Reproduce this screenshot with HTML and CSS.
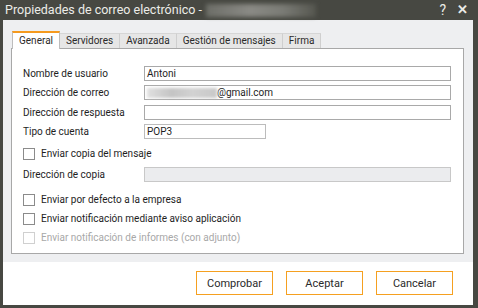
FILE: index.html
```html
<!DOCTYPE html>
<html lang="es">
<head>
  <meta charset="UTF-8">
  <title>Propiedades de correo electrónico</title>
  <link rel="stylesheet" href="styles.css">
</head>
<body>
  <div class="window">
    <div class="titlebar">
      <span class="title">Propiedades de correo electrónico -</span>
      <span class="blur-title"></span>
      <span class="title-btns"><span class="help">?</span><span class="close">&#x2715;</span></span>
    </div>

    <div class="content">
      <div class="tabs">
        <div class="tab active">General</div>
        <div class="tab">Servidores</div>
        <div class="tab">Avanzada</div>
        <div class="tab">Gestión de mensajes</div>
        <div class="tab">Firma</div>
      </div>

      <div class="panel">
        <div class="row">
          <label>Nombre de usuario</label>
          <div class="field">Antoni</div>
        </div>
        <div class="row">
          <label>Dirección de correo</label>
          <div class="field"><span class="blur-mail"></span>@gmail.com</div>
        </div>
        <div class="row">
          <label>Dirección de respuesta</label>
          <div class="field"></div>
        </div>
        <div class="row">
          <label>Tipo de cuenta</label>
          <div class="field short">POP3</div>
        </div>

        <div class="check first"><span class="box"></span>Enviar copia del mensaje</div>

        <div class="row copy">
          <label>Dirección de copia</label>
          <div class="field disabled"></div>
        </div>

        <div class="check gap"><span class="box"></span>Enviar por defecto a la empresa</div>
        <div class="check"><span class="box"></span>Enviar notificación mediante aviso aplicación</div>
        <div class="check off"><span class="box"></span>Enviar notificación de informes (con adjunto)</div>
      </div>
    </div>

    <div class="footer">
      <button class="btn">Comprobar</button>
      <button class="btn">Aceptar</button>
      <button class="btn">Cancelar</button>
    </div>
  </div>
</body>
</html>
```

FILE: styles.css
```css
/* base */
body {
  margin: 0;
  font-family: Roboto, "Noto Sans", sans-serif;
  font-size: 10px;
  color: #1e1e1e;
}

.window {
  width: 478px;
  height: 308px;
  box-sizing: border-box;
  background-color: #474842;
  padding: 0 5px 3px 3px;
  display: flex;
  flex-direction: column;
}

/* title bar */
.titlebar {
  height: 20px;
  flex: none;
  display: flex;
  align-items: center;
  padding-left: 5px;
  color: #ecece8;
  font-size: 12.5px;
  margin-left: -3px;
  margin-right: -5px;
  padding-right: 10px;
}

.title {
  line-height: 20px;
}

.blur-title {
  width: 110px;
  height: 13px;
  margin-left: 4px;
  background: linear-gradient(90deg, #6c6d67, #8a8a85 40%, #7a7b75 70%, #55564f);
  filter: blur(2px);
}

.title-btns {
  margin-left: auto;
  display: flex;
  gap: 11px;
  font-size: 14px;
}

.close {
  font-weight: bold;
  font-size: 13px;
}

/* main area */
.content {
  flex: none;
  background-color: #eeeff1;
  padding: 11px 9px 8px 8px;
}

.tabs {
  display: flex;
  align-items: flex-end;
  height: 17px;
  padding-left: 1px;
}

.tab {
  height: 14px;
  line-height: 14px;
  padding: 0 6px;
  background-color: #e6e6e6;
  border-right: 1px solid #cfcfcf;
  border-top: 1px solid #d6d6d6;
  color: #2a2a2a;
}

.tab.active {
  height: 16px;
  background-color: #fff;
  border: 1px solid #bdbdbd;
  border-top: 2px solid #f59a1e;
  border-bottom: none;
  padding: 0 6px;
  margin-bottom: -1px;
  position: relative;
  line-height: 16px;
}

.panel {
  box-sizing: border-box;
  background-color: #fff;
  border: 1px solid #a8a8a8;
  height: 206px;
  padding: 17px 12px 0 11px;
}

.row {
  display: flex;
  align-items: center;
  height: 15px;
  margin-bottom: 4.4px;
}

.row label {
  width: 121px;
  flex: none;
}

.field {
  flex: 1;
  height: 13px;
  border: 1px solid #a9a9a9;
  line-height: 13px;
  padding-left: 2px;
  display: flex;
  align-items: center;
}

.field.short {
  flex: none;
  width: 118px;
  border-color: #bcbcbc;
}

.field.disabled {
  background-color: #ebecee;
  border-color: #c8c8c8;
}

.blur-mail {
  width: 70px;
  height: 10px;
  background: linear-gradient(90deg, #e0e0e0, #c4c4c4 35%, #d2d2d2 65%, #c8c8c8);
  filter: blur(1.5px);
}

.check {
  display: flex;
  align-items: center;
  height: 19px;
}

.check.first {
  margin-top: 5px;
}

.row.copy {
  margin-top: 4px;
  margin-bottom: 0;
}

.check.gap {
  margin-top: 8px;
}

.box {
  width: 10px;
  height: 10px;
  border: 1px solid #8b8b8b;
  background-color: #fff;
  margin-right: 6px;
}

.check.off {
  color: #a8a8a8;
}

.check.off .box {
  border-color: #d0d0d0;
}

/* buttons */
.footer {
  flex: 1;
  background-color: #fff;
  display: flex;
  justify-content: flex-end;
  align-items: flex-start;
  gap: 13px;
  padding: 9px 20px 0 0;
}

.btn {
  font-family: Roboto, "Noto Sans", sans-serif;
  font-size: 11px;
  width: 77px;
  height: 24px;
  background-color: #fff;
  border: 1px solid #f5a020;
  color: #2a2a2a;
  padding: 0;
}
```
